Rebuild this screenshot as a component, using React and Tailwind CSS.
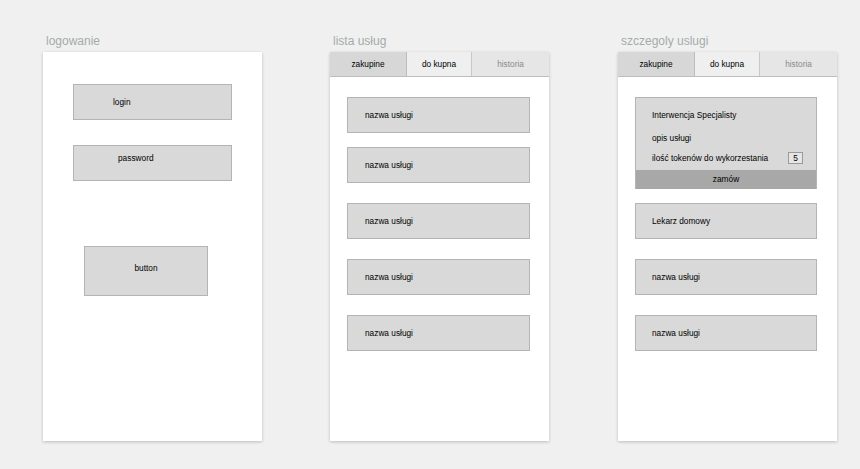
import React from 'react'

const Box = ({ children, className = '' }) => (
    <div
        className={`h-[36px] border border-[#b4b4b4] bg-[#d9d9d9] text-[8.3px] text-black flex items-center ${className}`}>
        {children}
    </div>
)

const Tabs = () => (
    <div className="flex h-[25px] border-b border-[#bdbdbd] text-[8.3px]">
        <div className="w-[77px] bg-[#d7d7d7] border-r border-[#bdbdbd] flex items-center justify-center text-black">
            zakupine
        </div>
        <div className="w-[65px] bg-[#efefef] border-r border-[#c8c8c8] flex items-center justify-center text-black">
            do kupna
        </div>
        <div className="flex-1 bg-[#e6e6e6] flex items-center justify-center text-[#8a8a8a]">
            historia
        </div>
    </div>
)

const Panel = ({ title, children }) => (
    <div className="flex flex-col">
        <div className="h-[14px] mb-[4px] pl-[3px] text-[12px] leading-[14px] text-[#a5abab]">
            {title}
        </div>
        <div className="w-[219px] h-[389px] bg-white shadow-[0_1px_3px_rgba(0,0,0,0.22)] flex flex-col">
            {children}
        </div>
    </div>
)

export default function App() {
    const items = ['nazwa usługi', 'nazwa usługi', 'nazwa usługi', 'nazwa usługi', 'nazwa usługi']

    return (
        <div
            className="w-[860px] h-[469px] bg-[#f0f0f0] flex pl-[43px] pt-[34px] gap-[68px]"
            style={{ fontFamily: '"Liberation Sans", Arial, sans-serif' }}>
            <Panel title="logowanie">
                <div className="flex flex-col pt-[32px]">
                    <Box className="ml-[30px] w-[159px] pl-[39px]">login</Box>
                    <div className="ml-[30px] mt-[25px] w-[159px] h-[36px] border border-[#b4b4b4] bg-[#d9d9d9] text-[8.3px] leading-[10px] pl-[44px] pt-[7px]">
                        password
                    </div>
                    <div className="ml-[41px] mt-[65px] w-[124px] h-[50px] border border-[#b4b4b4] bg-[#d9d9d9] text-[8.3px] flex items-center justify-center pb-[6px]">
                        button
                    </div>
                </div>
            </Panel>

            <Panel title="lista usług">
                <Tabs />
                <div className="flex flex-col pl-[17px] pt-[20px]">
                    {items.map((name, i) => (
                        <Box
                            key={i}
                            className={`w-[183px] pl-[17px] ${i === 0 ? '' : i === 1 ? 'mt-[14px]' : 'mt-[20px]'}`}>
                            {name}
                        </Box>
                    ))}
                </div>
            </Panel>

            <div className="ml-px">
                <Panel title="szczegoly uslugi">
                    <Tabs />
                    <div className="flex flex-col pl-[17px] pt-[20px]">
                        <div className="w-[182px] h-[92px] border border-[#b4b4b4] border-b-0 bg-[#d9d9d9] flex flex-col text-[8.3px] text-black">
                            <div className="pl-[16px] pt-[12px] leading-[10px]">
                                Interwencja Specjalisty
                            </div>
                            <div className="pl-[16px] mt-[13px] leading-[10px]">
                                opis usługi
                            </div>
                            <div className="pl-[16px] pr-[13px] mt-[9px] flex items-center justify-between">
                                <span className="leading-[10px]">
                                    ilość tokenów do wykorzestania
                                </span>
                                <span className="w-[15px] h-[12px] border border-[#9a9a9a] bg-[#e6e6e6] flex items-center justify-center">
                                    5
                                </span>
                            </div>
                            <div className="mt-auto h-[19px] bg-[#a8a8a8] flex items-center justify-center">
                                zamów
                            </div>
                        </div>
                        <Box className="w-[182px] pl-[16px] mt-[14px]">Lekarz domowy</Box>
                        <Box className="w-[182px] pl-[16px] mt-[20px]">nazwa usługi</Box>
                        <Box className="w-[182px] pl-[16px] mt-[20px]">nazwa usługi</Box>
                    </div>
                </Panel>
            </div>
        </div>
    )
}
